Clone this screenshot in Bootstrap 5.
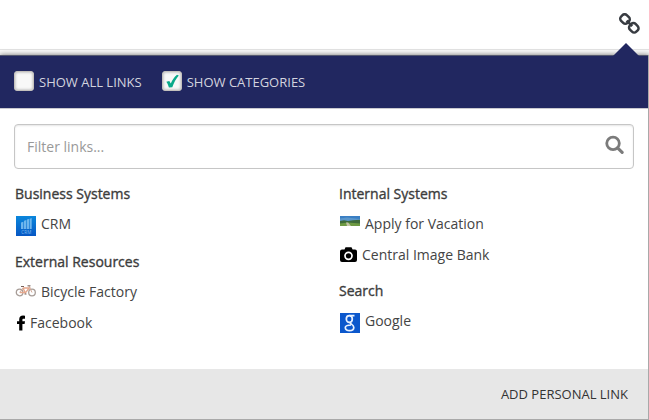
<!DOCTYPE html>
<html lang="en">
<head>
<meta charset="utf-8">
<meta name="viewport" content="width=device-width, initial-scale=1">
<title>Links</title>
<link href="https://cdn.jsdelivr.net/npm/bootstrap@5.3.0/dist/css/bootstrap.min.css" rel="stylesheet">
<style>
body{font-family:"Open Sans",sans-serif;font-size:14px;line-height:20px;color:#444;height:420px;overflow:hidden;background:#fff}
.topbar{height:50px;border-bottom:1px solid #e2e2e2}
.gap-strip{height:5px;background:#f7f7f7}
.chain{width:21px;height:21px;margin:13px 9px 0 0}
.links-panel{height:365px;border-right:1px solid #a9a9a9;border-bottom:1px solid #a9a9a9;box-shadow:0 0 5px rgba(0,0,0,.55);background:#fff}
.pointer{right:9px;top:-12px;width:26px;height:13px}
.options{height:54px;background:#212760;border-top:1px solid #55596f;padding-left:14px;border-bottom:1px solid #c9c9cf;color:#d3d4df;font-size:13px}
.option+.option{margin-left:20px}
.option .form-check-input{width:20px;height:20px;margin:-2px 5px 0 0;border:1px solid #c4c1bd;border-radius:3px;background-color:#f8f8f8;box-shadow:inset 0 0 3px rgba(0,0,0,.35);background-image:none}
.tick{left:4px;top:2px;width:13px;height:15px}
.filter{margin:15px 14px 0 14px;height:45px;border:1px solid #c6c6c6;border-radius:4px;box-shadow:inset 0 1px 2px rgba(0,0,0,.1);padding:0 9px 0 12px}
.filter input{font-size:14px;color:#555;height:30px}
.filter input::placeholder{color:#999;opacity:1}
.filter svg{width:20px;height:20px;margin-top:-4px}
.columns{height:200px;padding-left:15px}
.links-col{width:324px;flex:none;padding-top:15px}
.links-col+.links-col{width:295px}
.group-title{font-size:14px;line-height:20px;height:20px;font-weight:400;-webkit-text-stroke:.35px #3c3c3c;color:#3c3c3c;margin:0 0 10px}
.entry{height:20px;color:#444;text-decoration:none;margin-bottom:11px;white-space:nowrap}
.group-end{margin-bottom:18px}
.links-col+.links-col .group-end{margin-bottom:16px}
.entry svg{flex:none}
.footer-bar{height:50px;background:#e7e7e7;padding-right:20px;color:#333}
.footer-bar a{font-size:13px;color:#333}
</style>
</head>
<body>
<header class="topbar d-flex justify-content-end">
  <svg class="chain" viewBox="0 0 21 21" fill="none" stroke="#383c42" stroke-width="2.500"><rect x="-4.500" y="-4" width="9" height="8" rx="3" transform="translate(6 6) rotate(45)"/><rect x="-4.500" y="-4" width="9" height="8" rx="3" transform="translate(14.800 14.800) rotate(45)"/><path d="M7.600 7.600l5.600 5.600"/></svg>
</header>
<div class="gap-strip"></div>
<main class="links-panel position-relative d-flex flex-column">
  <svg class="pointer position-absolute" viewBox="0 0 26 13"><path d="M0 13L13 0 26 13z" fill="#212760"/></svg>
  <div class="options d-flex align-items-center">
    <label class="option d-flex align-items-center position-relative"><input class="form-check-input" type="checkbox"><span>SHOW ALL LINKS</span></label>
    <label class="option d-flex align-items-center position-relative"><input class="form-check-input" type="checkbox"><svg class="tick position-absolute" viewBox="0 0 13 15"><path d="M.3 7.800l3-.8 1.500 2.600C6.200 6.200 8.300 3 11 .8l1.800.6C9.900 4.800 7.700 9 6.300 13.300l-3.400.3C2.300 11.300 1.600 9.500.3 7.800z" fill="#0aa98a"/></svg><span>SHOW CATEGORIES</span></label>
  </div>
  <div class="filter d-flex align-items-center">
    <input class="form-control border-0 p-0 shadow-none bg-transparent" type="text" placeholder="Filter links..." aria-label="Filter links">
    <svg viewBox="0 0 20 20" fill="none" stroke="#7b7b7b"><circle cx="8.300" cy="8.300" r="6.500" stroke-width="2.900"/><path d="M13 13l4.700 4.700" stroke-width="3.200" stroke-linecap="round"/></svg>
  </div>
  <div class="columns d-flex">
    <section class="links-col">
      <h2 class="group-title">Business Systems</h2>
      <a href="#" class="entry group-end d-flex align-items-center">
        <svg class="me-1 mt-1" width="22" height="20" viewBox="0 0 22 20"><defs><linearGradient id="b" x2="0" y2="1"><stop stop-color="#0a87dc"/><stop offset="1" stop-color="#0757c4"/></linearGradient></defs><path d="M1 0h20v20H1z" fill="url(#b)"/><path d="M6 6.500l2.400-.8V13H6zM9 4.700l2.400-.8V13H9zM12 3.500l2.400-.8V13H12zM15 2.700l1.700-.7V13H15z" fill="#79bdf0" opacity=".9"/><text x="6.300" y="18" font-size="4.500" textLength="10" fill="#80bdf0">CRM</text></svg>
        <span>CRM</span></a>
      <h2 class="group-title">External Resources</h2>
      <a href="#" class="entry d-flex align-items-center">
        <svg class="me-1" width="22" height="14" viewBox="0 0 22 14" fill="none"><g stroke="#a79d98" stroke-width="1.300"><circle cx="4.600" cy="7.500" r="3.300"/><circle cx="17" cy="7.500" r="3.300"/></g><path d="M7.800 3h6.500l-4 5L8 3M5 7.500h5.500" stroke="#e5a78d" stroke-width="1.400"/><path d="M4.600 7.500L8 3M14 1l3 6.500" stroke="#d3aa98"/><path d="M6 1.500h3M12.500.8h3M9.500 9h2" stroke="#75615a"/></svg>
        <span>Bicycle Factory</span></a>
      <a href="#" class="entry d-flex align-items-center">
        <svg width="15" height="16" viewBox="0 0 15 16"><path d="M10 .8v2.900H8.600c-1 0-1.200.5-1.200 1.200v1.300H10l-.4 2.900H7.400V15.500H4.200V9.100H2V6.200h2.200V4.400C4.200 2.100 5.600.6 8.100.6z" fill="#000"/></svg>
        <span>Facebook</span></a>
    </section>
    <section class="links-col">
      <h2 class="group-title">Internal Systems</h2>
      <a href="#" class="entry d-flex align-items-center">
        <svg class="me-1" width="22" height="18" viewBox="0 0 22 18"><path d="M1 1h20v10H1z" fill="#3a7fc4"/><path d="M1 3.500l7-1 13 1.500v3H1z" fill="#5b97cc"/><path d="M1 6l4-.8 4 .8 5-.8 7-.4V11H1z" fill="#3e6a3b"/><path d="M1 8.500l8-1 12 1V11H1z" fill="#6e9a43"/><path d="M7 7.500l2 0 3 3.500H8z" fill="#c4c4a6"/></svg>
        <span>Apply for Vacation</span></a>
      <a href="#" class="entry group-end d-flex align-items-center">
        <svg width="23" height="16" viewBox="0 0 23 16"><path d="M3 2.500h2.500l1-2.200h6l1.100 2.200H16q2 0 2 2V13q0 2-2 2H3q-2 0-2-2V4.500q0-2 2-2z" fill="#000"/><circle cx="9.500" cy="8.800" r="3.500" fill="none" stroke="#fff" stroke-width="1.700"/></svg>
        <span>Central Image Bank</span></a>
      <h2 class="group-title">Search</h2>
      <a href="#" class="entry d-flex align-items-center">
        <svg class="me-1 mt-1" width="22" height="20" viewBox="0 0 22 20" aria-label="Google"><path d="M1 0h20v20H1z" fill="#0b57cc"/><g fill="none" stroke="#e8f1ff" stroke-width="1.700"><ellipse cx="10.300" cy="6" rx="3" ry="3.400"/><path d="M10.500 2.600H15.500M11.500 9.300C10 10.800 14.800 11.300 14.800 14.400S12.500 17.600 10.500 17.600 6.300 16.800 6.300 14.700 8.500 12 12 12"/></g></svg>
        <span>Google</span></a>
    </section>
  </div>
  <footer class="footer-bar d-flex align-items-center justify-content-end mt-auto"><a href="#" class="text-decoration-none">ADD PERSONAL LINK</a></footer>
</main>
<script src="https://cdn.jsdelivr.net/npm/bootstrap@5.3.0/dist/js/bootstrap.bundle.min.js"></script>
</body>
</html>
